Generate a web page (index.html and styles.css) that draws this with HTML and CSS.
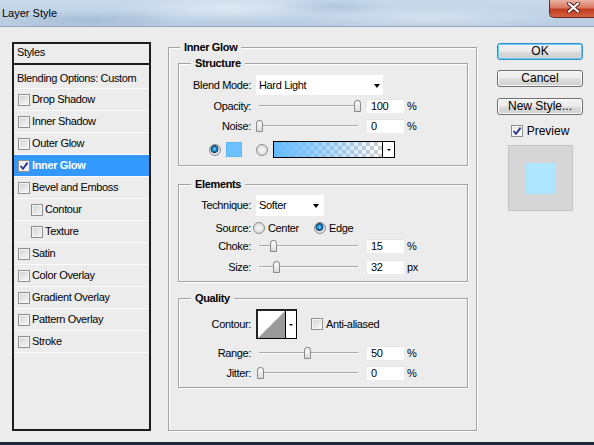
FILE: index.html
```html
<!DOCTYPE html>
<html>
<head>
<meta charset="utf-8">
<title>Layer Style</title>
<link rel="stylesheet" href="styles.css">
</head>
<body>
<div class="window">
  <div class="titlebar">
    <span class="title">Layer Style</span>
    <div class="close">
      <svg width="13" height="11" viewBox="0 0 13 11">
        <path d="M2 1.5 L11 9.5 M11 1.5 L2 9.5" stroke="#5a1c14" stroke-width="4" stroke-linecap="round"/>
        <path d="M2 1.5 L11 9.5 M11 1.5 L2 9.5" stroke="#ffffff" stroke-width="2.2" stroke-linecap="round"/>
      </svg>
    </div>
  </div>

  <div class="main">
    <div class="styles-panel">
      <div class="sp-head">Styles</div>
      <div class="sp-row sp-blend">Blending Options: Custom</div>
      <div class="sp-row"><span class="cb"></span>Drop Shadow</div>
      <div class="sp-row"><span class="cb"></span>Inner Shadow</div>
      <div class="sp-row"><span class="cb"></span>Outer Glow</div>
      <div class="sp-row sp-sel"><span class="cb on"><svg width="10" height="10" viewBox="0 0 10 10"><path d="M1.5 5 L4 7.8 L8.6 1.6" fill="none" stroke="#27328a" stroke-width="1.8"/></svg></span>Inner Glow</div>
      <div class="sp-row"><span class="cb"></span>Bevel and Emboss</div>
      <div class="sp-row sp-sub"><span class="cb"></span>Contour</div>
      <div class="sp-row sp-sub"><span class="cb"></span>Texture</div>
      <div class="sp-row"><span class="cb"></span>Satin</div>
      <div class="sp-row"><span class="cb"></span>Color Overlay</div>
      <div class="sp-row"><span class="cb"></span>Gradient Overlay</div>
      <div class="sp-row"><span class="cb"></span>Pattern Overlay</div>
      <div class="sp-row"><span class="cb"></span>Stroke</div>
    </div>

    <fieldset class="frame outer">
      <legend>Inner Glow</legend>
      <div class="outer-body">
        <fieldset class="frame structure">
          <legend>Structure</legend>
          <div class="row r-blend">
            <span class="lbl">Blend Mode:</span>
            <div class="select w-blend"><span>Hard Light</span><i class="arrow"></i></div>
          </div>
          <div class="row r-slider r-opacity">
            <span class="lbl">Opacity:</span>
            <div class="slider"><div class="track"></div><div class="thumb" style="left:98px"></div></div>
            <div class="num">100</div><span class="unit">%</span>
          </div>
          <div class="row r-slider r-noise">
            <span class="lbl">Noise:</span>
            <div class="slider"><div class="track"></div><div class="thumb" style="left:0px"></div></div>
            <div class="num">0</div><span class="unit">%</span>
          </div>
          <div class="row r-color">
            <span class="radio on"></span>
            <span class="swatch"></span>
            <span class="radio r2"></span>
            <div class="gradbox"><div class="grad-fill"></div><div class="grad-btn"><i class="arrow small"></i></div></div>
          </div>
        </fieldset>

        <fieldset class="frame elements">
          <legend>Elements</legend>
          <div class="row r-tech">
            <span class="lbl">Technique:</span>
            <div class="select w-tech"><span>Softer</span><i class="arrow"></i></div>
          </div>
          <div class="row r-source">
            <span class="lbl">Source:</span>
            <span class="radio src1"></span><span class="rtext">Center</span>
            <span class="radio on src2"></span><span class="rtext">Edge</span>
          </div>
          <div class="row r-slider r-choke">
            <span class="lbl">Choke:</span>
            <div class="slider"><div class="track"></div><div class="thumb" style="left:14px"></div></div>
            <div class="num">15</div><span class="unit">%</span>
          </div>
          <div class="row r-slider r-size">
            <span class="lbl">Size:</span>
            <div class="slider"><div class="track"></div><div class="thumb" style="left:17px"></div></div>
            <div class="num">32</div><span class="unit">px</span>
          </div>
        </fieldset>

        <fieldset class="frame quality">
          <legend>Quality</legend>
          <div class="row r-contour">
            <span class="lbl">Contour:</span>
            <div class="contour">
              <svg class="contour-prev" width="27" height="27" viewBox="0 0 27 27"><rect width="27" height="27" fill="#fff"/><polygon points="0,27 27,0 27,27" fill="#9a9a9a"/></svg>
              <div class="contour-btn"><i class="arrow small"></i></div>
            </div>
            <span class="cb aa"></span><span class="rtext">Anti-aliased</span>
          </div>
          <div class="row r-slider r-range">
            <span class="lbl">Range:</span>
            <div class="slider"><div class="track"></div><div class="thumb" style="left:48px"></div></div>
            <div class="num">50</div><span class="unit">%</span>
          </div>
          <div class="row r-slider r-jitter">
            <span class="lbl">Jitter:</span>
            <div class="slider"><div class="track"></div><div class="thumb" style="left:1px"></div></div>
            <div class="num">0</div><span class="unit">%</span>
          </div>
        </fieldset>
      </div>
    </fieldset>

    <div class="side">
      <div class="btn default">OK</div>
      <div class="btn b-cancel">Cancel</div>
      <div class="btn b-new">New Style...</div>
      <div class="preview-row"><span class="cb on"><svg width="10" height="10" viewBox="0 0 10 10"><path d="M1.5 5 L4 7.8 L8.6 1.6" fill="none" stroke="#27328a" stroke-width="1.8"/></svg></span><span>Preview</span></div>
      <div class="preview-box"><div class="preview-sq"></div></div>
    </div>
  </div>
  <div class="bottom-edge"></div>
</div>
</body>
</html>
```

FILE: styles.css
```css
* { box-sizing: border-box; }
html, body { margin: 0; padding: 0; }
body {
  width: 594px;
  height: 445px;
  overflow: hidden;
  font-family: "Liberation Sans", Arial, sans-serif;
  font-size: 11px;
  letter-spacing: -0.35px;
  color: #000;
  background: #ececec;
}
.window {
  width: 594px;
  height: 445px;
  display: flex;
  flex-direction: column;
  background: #ececec;
}

/* title bar */
.titlebar {
  height: 27px;
  flex: none;
  display: flex;
  justify-content: space-between;
  align-items: flex-start;
  border-bottom: 1px solid #93a6bd;
  background:
    radial-gradient(ellipse 110px 14px at 230px 9px, rgba(255,255,255,0.45), rgba(255,255,255,0)),
    radial-gradient(ellipse 140px 12px at 430px 18px, rgba(255,255,255,0.35), rgba(255,255,255,0)),
    radial-gradient(ellipse 90px 10px at 90px 20px, rgba(120,150,185,0.30), rgba(120,150,185,0)),
    radial-gradient(ellipse 60px 9px at 330px 6px, rgba(130,160,195,0.30), rgba(130,160,195,0)),
    linear-gradient(#cadaeb, #b7cbe1);
}
.title {
  font-size: 11px;
  letter-spacing: 0;
  line-height: 13px;
  padding: 7px 0 0 2px;
}
.close {
  width: 45px;
  height: 18px;
  border: 1px solid #6b2a22;
  border-top: none;
  border-right: none;
  border-radius: 0 0 0 5px;
  background: linear-gradient(#eab0a2 0%, #d97862 45%, #c23d22 55%, #d0603f 100%);
  display: flex;
  align-items: center;
  justify-content: center;
  padding-left: 3px;
  padding-bottom: 2px;
}

/* main area */
.main {
  flex: 1;
  display: flex;
  align-items: flex-start;
  padding: 14px 0 0 12px;
}

/* styles list */
.styles-panel {
  width: 139px;
  height: 389px;
  margin-top: 1px;
  border: 2px solid #1c1c1c;
  display: flex;
  flex-direction: column;
}
.sp-head {
  height: 21px;
  border-bottom: 2px solid #1c1c1c;
  padding: 2px 0 0 3px;
  line-height: 13px;
  flex: none;
}
.sp-row {
  height: 22px;
  flex: none;
  border-bottom: 1px solid #fbfbfb;
  display: flex;
  align-items: center;
  padding-left: 4px;
  line-height: 13px;
}
.sp-blend {
  height: 24px;
  align-items: flex-start;
  padding: 7px 0 0 3px;
}
.sp-sub { padding-left: 17px; }
.sp-sel {
  background: #3399ff;
  color: #fff;
  font-weight: bold;
}

/* checkbox */
.cb {
  width: 12px;
  height: 12px;
  flex: none;
  border: 1px solid #8e8f8f;
  background: linear-gradient(135deg, #d2d2d2, #f8f8f8);
  box-shadow: inset 0 0 0 1px #f4f4f4;
  margin-right: 2px;
  display: flex;
  align-items: center;
  justify-content: center;
}
.cb.on { background: linear-gradient(135deg, #e4e4e4, #ffffff); }

/* fieldsets */
fieldset.frame {
  margin: 0;
  padding: 0;
  min-width: 0;
  border: 1px solid #a3a3a3;
  box-shadow: inset 1px 1px 0 #fdfdfd, 1px 1px 0 #fdfdfd;
}
fieldset.frame > legend {
  font-weight: bold;
  line-height: 12px;
  padding: 0 4px;
  margin-left: 12px;
  background: #ececec;
}
fieldset.outer {
  width: 309px;
  height: 390px;
  margin-left: 17px;
}
fieldset.outer > legend { margin-left: 11px; }
.outer-body { padding: 4px 8px 0 9px; }

fieldset.structure { padding: 6px 0 7px; }
fieldset.elements { margin-top: 12px; padding: 5px 0 7px; }
fieldset.quality { margin-top: 10px; padding: 5px 0 7px; }

.row {
  display: flex;
  align-items: center;
  line-height: 13px;
}
.lbl {
  width: 72px;
  flex: none;
  text-align: right;
}

/* select */
.select {
  margin-left: 5px;
  background: #fff;
  display: flex;
  align-items: center;
  justify-content: space-between;
  padding: 0 3px 0 3px;
}
.w-blend { width: 127px; height: 20px; }
.w-tech { width: 68px; height: 21px; padding-right: 5px; }
.arrow {
  width: 0;
  height: 0;
  border-left: 3.5px solid transparent;
  border-right: 3.5px solid transparent;
  border-top: 4px solid #000;
  margin-top: 1px;
}
.arrow.small {
  border-left-width: 2px;
  border-right-width: 2px;
  border-top-width: 2px;
}

/* rows spacing */
.r-blend { height: 20px; }
.r-slider { height: 14px; }
.r-opacity { margin-top: 4px; }
.r-noise { margin-top: 6px; }
.r-color { height: 17px; margin-top: 8px; padding-left: 30px; }
.r-tech { height: 21px; }
.r-source { height: 14px; margin-top: 5px; }
.r-choke { margin-top: 4px; }
.r-size { margin-top: 7px; }
.r-contour { height: 30px; }
.r-range { margin-top: 7px; }
.r-jitter { margin-top: 6px; }

/* slider */
.slider {
  position: relative;
  width: 105px;
  height: 14px;
  margin-left: 5px;
  display: flex;
  align-items: center;
}
.track {
  flex: 1;
  margin: 0 3px 0 3px;
  height: 2px;
  border-top: 1px solid #a8a8a8;
  border-bottom: 1px solid #fafafa;
}
.thumb {
  position: absolute;
  top: 1px;
  width: 7px;
  height: 12px;
  border: 1px solid #8a8a8a;
  border-radius: 3.5px 3.5px 1px 1px / 4px 4px 1px 1px;
  background: linear-gradient(#ffffff, #d9d9d9);
}
.num {
  width: 37px;
  height: 14px;
  margin-left: 6px;
  background: #fff;
  padding-left: 4px;
  line-height: 14px;
  box-shadow: inset 0 1px 0 #e4e4e4;
}
.unit { margin-left: 3px; }

/* radio */
.radio {
  width: 12px;
  height: 12px;
  flex: none;
  border-radius: 50%;
  border: 1px solid #8a8a8a;
  background: radial-gradient(circle at 50% 50%, #f6f6f6 0%, #dadada 85%);
}
.radio.on {
  background: radial-gradient(circle at 45% 40%, #a6e4ff 0px, #2a98d6 1.6px, #0c5f98 3px, #0a3c63 3.7px, #e9e9e9 4.3px, #dcdcdc 100%);
}
.swatch {
  width: 16px;
  height: 15px;
  margin-left: 5px;
  background: #6ec1ff;
  box-shadow: inset 0 0 0 1px #62b5f4;
}
.radio.r2 { margin-left: 14px; }
.gradbox {
  width: 122px;
  height: 17px;
  margin-left: 5px;
  border: 1px solid #000;
  display: flex;
}
.grad-fill {
  flex: 1;
  background:
    linear-gradient(to right, #66bbff 0%, rgba(102,187,255,0.75) 30%, rgba(102,187,255,0) 100%),
    repeating-conic-gradient(#cfcfcf 0% 25%, #ffffff 0% 50%) 0 0 / 8px 8px;
}
.grad-btn {
  width: 12px;
  border-left: 1px solid #000;
  background: #fff;
  display: flex;
  align-items: center;
  justify-content: center;
}

/* source */
.radio.src1 { margin-left: 2px; }
.radio.src2 { margin-left: 15px; }
.rtext { margin-left: 3px; }

/* contour */
.contour {
  width: 41px;
  height: 30px;
  margin-left: 5px;
  border-style: solid;
  border-color: #222 #000 #000 #222;
  border-width: 2px 1px 1px 2px;
  background: #fff;
  display: flex;
}
.contour-prev { display: block; flex: none; }
.contour-btn {
  flex: 1;
  border-left: 1px solid #000;
  display: flex;
  align-items: center;
  justify-content: center;
}
.cb.aa { margin-left: 14px; margin-right: 0; }

/* right column */
.side {
  width: 86px;
  margin-left: 20px;
  margin-top: 2px;
  display: flex;
  flex-direction: column;
  align-items: center;
  font-size: 12px;
  letter-spacing: 0;
}
.btn {
  width: 86px;
  height: 17px;
  border: 1px solid #707070;
  border-radius: 3px;
  background: linear-gradient(#f3f3f3 0%, #ebebeb 48%, #dcdcdc 52%, #cfcfcf 100%);
  box-shadow: inset 0 0 0 1px #fbfbfb;
  text-align: center;
  line-height: 15px;
}
.btn.default {
  border-color: #3b8ccc;
  box-shadow: inset 0 0 0 1px #62d0f6;
}
.b-cancel { margin-top: 10px; }
.b-new { margin-top: 11px; }
.preview-row {
  margin-top: 10px;
  height: 12px;
  display: flex;
  align-items: center;
  line-height: 13px;
}
.preview-row .cb { margin-right: 4px; }
.preview-box {
  margin-top: 8px;
  width: 65px;
  height: 66px;
  border: 1px solid #c4c4c4;
  background: #d6d6d6;
  display: flex;
  align-items: center;
  justify-content: center;
}
.preview-sq {
  width: 31px;
  height: 31px;
  background: #aee5ff;
}

.bottom-edge {
  height: 3px;
  flex: none;
  background: #1d2836;
}
```
